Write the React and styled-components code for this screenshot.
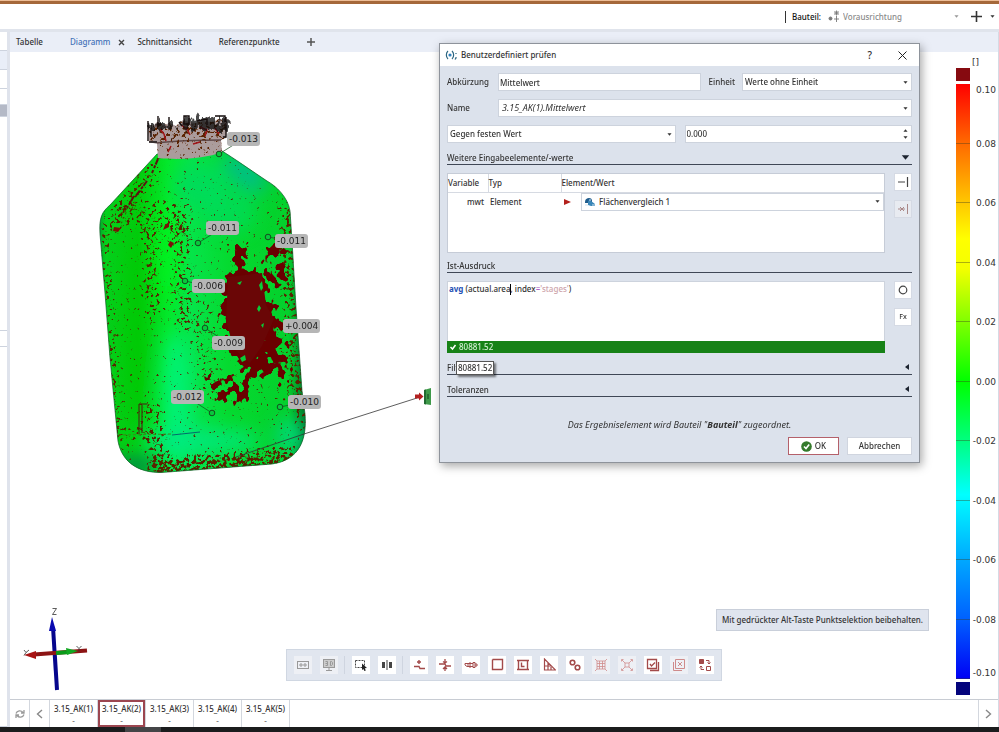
import React from 'react'
import styled, { createGlobalStyle, css } from 'styled-components'

const sans = '"Noto Sans", "Open Sans", sans-serif'
const mono = '"DejaVu Sans", sans-serif'

const tabs = [
  { title: 'Tabelle' },
  { title: 'Diagramm', active: true },
  { title: 'Schnittansicht' },
  { title: 'Referenzpunkte' }
]

const stages = ['3.15_AK(1)', '3.15_AK(2)', '3.15_AK(3)', '3.15_AK(4)', '3.15_AK(5)']

const scale = ['0.10', '0.08', '0.06', '0.04', '0.02', '0.00', '-0.02', '-0.04', '-0.06', '-0.08', '-0.10']

// label position and the measured point it belongs to
const deviations = [
  { text: '-0.013', x: 227, y: 131, px: 219, py: 153 },
  { text: '-0.011', x: 206, y: 220, px: 198, py: 242 },
  { text: '-0.011', x: 275, y: 233, px: 268, py: 236 },
  { text: '-0.006', x: 192, y: 278, px: 185, py: 280 },
  { text: '+0.004', x: 283, y: 318 },
  { text: '-0.009', x: 212, y: 335, px: 205, py: 327 },
  { text: '-0.012', x: 171, y: 389, px: 212, py: 412 },
  { text: '-0.010', x: 288, y: 394, px: 280, py: 406 }
]

const Caret = ({ dir = 'down', size = 5, color = '#333' }) => (
  <svg width={size} height={size} viewBox='0 0 6 6' fill={color} aria-hidden='true'>
    {dir === 'down' && <path d='M.5 1.500h5L3 4.500z' />}
    {dir === 'up' && <path d='M.5 4.500h5L3 1.500z' />}
    {dir === 'left' && <path d='M5 0v6L1 3z' />}
  </svg>
)

const Dropdown = ({ id, label, value, italic, indent, icon }) => (
  <SelectBox>
    {icon}
    <select id={id} aria-label={label} className={italic ? 'italic' : indent ? 'indent' : ''}>
      <option>{value}</option>
    </select>
    <Caret />
  </SelectBox>
)

const Section = ({ title, open, plain, children }) => (
  <SectionHeader $plain={plain}>
    <span>{title}</span>
    {!plain && (
      <button aria-label={title}>
        <Caret dir={open ? 'down' : 'left'} size={open ? 9 : 6} color='#1d2430' />
      </button>
    )}
    {children}
  </SectionHeader>
)

const outline =
  'M157 153 L222 150 C232 156 252 170 267 180 C276 185 288 196 290 210 L292 240 L296 307 L302 390 L305 413 ' +
  'C307 438 300 459 272 463 L168 471 C140 474 122 462 118 440 L110 357 L105 292 L100 233 C99 216 102 211 110 204 Z'

const Bottle = () => (
  <svg width='350' height='375' viewBox='90 105 350 375' aria-hidden='true'>
    <defs>
      <clipPath id='bottle'><path d={outline} /></clipPath>
      <linearGradient id='side' x1='0' x2='1'>
        <stop offset='0' stopColor='#028a3a' />
        <stop offset='0.05' stopColor='#05d01c' />
        <stop offset='0.2' stopColor='#02cc0c' />
        <stop offset='0.34' stopColor='#04e82c' />
        <stop offset='0.45' stopColor='#06e44a' />
        <stop offset='0.62' stopColor='#05da30' />
        <stop offset='0.9' stopColor='#04d02c' />
        <stop offset='1' stopColor='#03592a' />
      </linearGradient>
      <filter id='soft' x='-50%' y='-50%' width='200%' height='200%'><feGaussianBlur stdDeviation='9' /></filter>
      <filter id='speckle' filterUnits='userSpaceOnUse' x='90' y='105' width='230' height='375'>
        <feTurbulence type='fractalNoise' baseFrequency='0.3' numOctaves='3' seed='7' result='noise' />
        <feGaussianBlur in='SourceGraphic' stdDeviation='4' result='area' />
        <feComposite in='noise' in2='area' operator='arithmetic' k1='0' k2='9' k3='4.500' k4='-7' result='hit' />
        <feFlood floodColor='#5a2206' />
        <feComposite in2='hit' operator='in' />
      </filter>
      <filter id='blotch' filterUnits='userSpaceOnUse' x='190' y='230' width='120' height='180'>
        <feTurbulence type='fractalNoise' baseFrequency='0.14 0.11' numOctaves='2' seed='12' result='noise' />
        <feGaussianBlur in='SourceGraphic' stdDeviation='4' result='area' />
        <feComposite in='noise' in2='area' operator='arithmetic' k1='0' k2='22' k3='11' k4='-17' result='hit' />
        <feFlood floodColor='#6a0606' />
        <feComposite in2='hit' operator='in' />
      </filter>
      <filter id='ink' filterUnits='userSpaceOnUse' x='140' y='110' width='95' height='40'>
        <feTurbulence type='fractalNoise' baseFrequency='0.26 0.12' numOctaves='3' seed='4' result='noise' />
        <feGaussianBlur in='SourceGraphic' stdDeviation='2' result='area' />
        <feComposite in='noise' in2='area' operator='arithmetic' k1='0' k2='14' k3='7' k4='-11' result='hit' />
        <feFlood floodColor='#0c0808' />
        <feComposite in2='hit' operator='in' />
      </filter>
      <clipPath id='crown'>
        <path d='M148 124 L151 127 L157 121 L163 124 L170 122 L176 125 L183 119 L189 121 L196 122 L203 120 L212 121 L219 118 L227 118 L226 137 L221 139 L222 151 C205 158 178 159 158 157 L157 143 L149 141Z' />
      </clipPath>
    </defs>

    <g clipPath='url(#bottle)'>
      <rect x='95' y='145' width='215' height='335' fill='url(#side)' />
      <g filter='url(#soft)'>
        <ellipse cx='245' cy='172' rx='26' ry='12' fill='#00b8a4' opacity='0.8' transform='rotate(38 245 172)' />
        <ellipse cx='200' cy='185' rx='26' ry='22' fill='#00dc58' />
        <ellipse cx='230' cy='210' rx='26' ry='22' fill='#00dc60' opacity='0.7' />
        <ellipse cx='176' cy='400' rx='14' ry='70' fill='#04f488' opacity='0.8' />
        <ellipse cx='200' cy='440' rx='60' ry='13' fill='#02e884' opacity='0.8' />
        <ellipse cx='290' cy='435' rx='15' ry='18' fill='#02d884' opacity='0.8' />
        <ellipse cx='166' cy='250' rx='9' ry='50' fill='#04f814' opacity='0.7' />
        <ellipse cx='136' cy='330' rx='12' ry='90' fill='#00c800' opacity='0.6' />
        <ellipse cx='135' cy='464' rx='26' ry='7' fill='#047c5c' />
      </g>
      <g filter='url(#speckle)'>
        <rect x='95' y='145' width='215' height='335' opacity='0.1' />
        <path d='M153 160 L108 206 L112 240 L128 215 L160 175Z' opacity='0.36' />
        <path d='M112 205 L188 200 L190 235 L120 225Z' opacity='0.34' />
        <path d='M142 225 L157 225 L160 320 L144 320Z' opacity='0.4' />
        <path d='M172 220 L190 215 L192 330 L174 330Z' opacity='0.38' />
        <path d='M98 220 L108 220 L124 450 L112 450Z' opacity='0.4' />
        <path d='M280 200 L294 205 L308 440 L290 400Z' opacity='0.52' />
        <path d='M190 300 L215 290 L218 400 L196 400Z' opacity='0.22' />
        <path d='M150 458 L300 446 L290 470 L150 480Z' opacity='0.66' />
        <path d='M138 400 L160 400 L170 470 L150 470Z' opacity='0.36' />
        <path d='M112 425 L160 430 L160 440 L112 436Z' opacity='0.36' />
      </g>
      <g filter='url(#blotch)'>
        <path d='M226 272 L264 268 L270 300 L281 318 L272 350 L266 372 L246 376 L230 354 L221 322Z' />
        <path d='M231 240 L241 240 L250 272 L236 274Z' />
        <path d='M262 246 L284 238 L288 290 L268 280Z' opacity='0.64' />
        <path d='M208 372 L250 378 L250 404 L210 404Z' opacity='0.64' />
        <path d='M262 330 L288 340 L290 382 L262 380Z' opacity='0.66' />
      </g>
      <path d='M228 276 L262 272 L266 304 L274 318 L262 345 L250 362 L234 348 L226 320Z' fill='#6a0606' />
      <path d='M237 282l5-2-2 4zM259 284l3-4 1 7-2 3zM257 308l2-4 2 3-2 4zM261 324l3-2-1 5zM240 357l5-3 1 5-4 2z' fill='#08cc38' />
      <path d='M139 403v30M142 404v28M139 403h8' stroke='#4a1a10' fill='none' />
      <path d='M172 434l28-3' stroke='#046a6c' />
      <path d='M118 434l54-1' stroke='#3b8a1a' strokeDasharray='3 2' />
      <path d='M158 158l-6 14M147 180l-12 16M134 195l-7 12' stroke='#5c1210' strokeWidth='2' strokeDasharray='6 1 3 2' />
      <path d='M165 224l4-3 0 5-6 3zM170 240l4 2-3 5-3-3z' fill='#7a1208' />
      <path d='M114 226l7 1-3 4-5-1z' fill='#7a1208' />
    </g>
    <path d={outline} fill='none' stroke='#0a5a22' strokeWidth='1' opacity='0.7' />

    <g clipPath='url(#crown)'>
      <rect x='145' y='112' width='85' height='50' fill='#ab9c9c' />
      <path d='M157 142 C180 139 205 139 222 139' stroke='#5f4848' fill='none' strokeWidth='1.500' />
      <g filter='url(#speckle)'>
        <rect x='145' y='112' width='85' height='28' opacity='0.5' />
        <rect x='145' y='140' width='85' height='22' opacity='0.25' />
      </g>
      <path d='M160 128l4 5 2 7M181 124l6 4 3 6M200 126l7 3-2 6M215 127l4 6M171 145l-3 6M193 143l7-2' stroke='#a01418' fill='none' strokeWidth='1.500' />
    </g>
    <path filter='url(#ink)' d='M148 120h28v9h-28zM182 116h46v14h-46z' opacity='0.75' />
    <path d='M148 120v20M151 124v12M158 115v9l3-2M169 116v7M179 121l3 4M184 115h5v8h-5zM197 120l10-2v6M215 115h10v6M226 116v20h-3M149 141h8' stroke='#140c0c' strokeWidth='1.400' fill='none' />

    <g stroke='#164a1e' fill='none'>
      {deviations.filter((d) => d.px).map((d) => (
        <g key={d.text + d.px}>
          <path d={`M${d.px} ${d.py}L${d.x + 16} ${d.y + 7}`} strokeWidth='0.700' />
          <circle cx={d.px} cy={d.py} r='2.800' fill='#08c83c' />
        </g>
      ))}
    </g>
    <path d='M236 456 L304 433 L417 397' stroke='#333' strokeWidth='0.800' fill='none' />
    <path d='M415 393.500h4v-2l4.500 4-4.500 4v-2h-4z' fill='#b32020' />
    <path d='M424 389l7-2v17l-7-1z' fill='#3f9a4a' />
    <path d='M424 389l2-.6v15l-2-.4z' fill='#226b31' />
    <path d='M428 393v5' stroke='#14431c' />
  </svg>
)

const Axes = () => (
  <svg width='70' height='90' viewBox='20 605 70 90' aria-hidden='true'>
    <path d='M53 626l4 63' stroke='#06068c' strokeWidth='4' />
    <path d='M52 616l4 14h-7z' fill='#0a0ab0' />
    <path d='M34 653.500l53-4' stroke='#8c1414' strokeWidth='4' />
    <path d='M24 654l12-4v8z' fill='#a81414' />
    <path d='M56 652l14-1' stroke='#0a9a1a' strokeWidth='4' />
    <path d='M78 650l-12-3 1 7z' fill='#12a822' />
    <g stroke='#333' strokeWidth='0.800' fill='none'>
      <path d='M52.500 607.500h4l-4 6h4' />
      <path d='M24 649l2 2.500 3-2.500M26 651.500l-2 3' />
      <path d='M76.500 645l2.500 2.500 2.500-2.500M79 647.500v3' />
    </g>
  </svg>
)

const red = '#a34a4a'
const toolGroups = [
  [
    { name: 'Aufnahme', off: true, icon: <g stroke='#999' fill='none'><rect x='1.500' y='3.500' width='11' height='7' /><path d='M4 6h2v2H4zM8 6h2v2H8z' /></g> },
    { name: '3D-Ansicht', off: true, icon: <g stroke='#999' fill='none'><rect x='1.500' y='1.500' width='11' height='8' fill='#ccc' /><path d='M3.500 3.500h2v4h-2M3.500 5.500h2M8.500 3.500v4h1l1-1v-2l-1-1zM7 10v2M4 12.500h6' /></g> }
  ],
  [
    { name: 'Auswahl', icon: <g><path d='M1.500 2.500h9v7h-9z' fill='none' stroke='#444' strokeDasharray='2 1' /><path d='M8 5.500l5 4.500-2.200.3 1 2.200-1.400.6-1-2.200L8 12z' fill='#222' /></g> },
    { name: 'Spiegeln', icon: <g fill='#444'><path d='M2 4h3v6H2zM9 4h3v6H9zM6.500 2h1v10h-1z' /></g> }
  ],
  [
    { name: 'Punkt', icon: <path d='M7 2v4M5 4h4M2 8.500h5l1 2h5' stroke={red} strokeWidth='1.400' fill='none' /> },
    { name: 'Abstand', icon: <path d='M1 6h6l1 2h5M7 1v4M5 3.500L7 5l2-1.500M7 13V9M5 11l2-2 2 2' stroke={red} strokeWidth='1.300' fill='none' /> },
    { name: 'Bohrung', icon: <path d='M1 5.500h3v3H3l-2-1.500zM6 4v6M4 5.500h5M4 8.500h5M9 4.500h2v5H9zM11 6h2v2h-2' stroke={red} strokeWidth='1' fill='none' /> },
    { name: 'Rahmen', icon: <path d='M2.500 1.500h10v10M12.500 11.500h-10v-10' stroke={red} strokeWidth='1.400' fill='none' /> },
    { name: 'Ebene', icon: <path d='M2.500 2.500h9v9h-9zM1 2.500h12M1 11.500h12M5.500 4.500v4h3' stroke={red} strokeWidth='1.400' fill='none' /> },
    { name: 'Winkel', icon: <path d='M2.500 1v11h11zM3 8h6M6 5v7M9 9v3' stroke={red} strokeWidth='1.200' fill='none' /> },
    { name: 'Kreise', icon: <g stroke={red} strokeWidth='1.600' fill='none'><circle cx='4.500' cy='4.500' r='2.300' /><circle cx='9.500' cy='9.500' r='2.300' /><path d='M5 7l2-2M7 9l2-2' strokeWidth='1' /></g> },
    { name: 'Raster', off: true, icon: <path d='M3 3h8v8H3zM5.500 3v8M8.500 3v8M3 5.500h8M3 8.500h8M1 1l2 2M13 1l-2 2M1 13l2-2M13 13l-2-2' stroke='#cf8b8b' fill='none' strokeWidth='0.800' /> },
    { name: 'Zentrum', off: true, icon: <path d='M5 5h4v4H5zM2 2l3 3M12 2L9 5M2 12l3-3M12 12L9 9M1.500 3.500v-2h2M10.500 1.500h2v2M1.500 10.500v2h2M10.500 12.500h2v-2' stroke='#cf8b8b' fill='none' strokeWidth='0.800' /> },
    { name: 'Bestätigen', icon: <path d='M1.500 1.500h9v9h-9zM12.500 4v8.500H4M4 6l1.500 2L9 4.500' stroke={red} strokeWidth='1.300' fill='none' /> },
    { name: 'Verwerfen', off: true, icon: <path d='M3.500 1.500h9v9h-9zM1.500 4v8.500H10M6 4l4 4M10 4l-4 4' stroke='#cf8b8b' fill='none' /> },
    { name: 'Tauschen', icon: <g stroke={red} fill='none'><path d='M1.500 1.500h4v4h-4z' fill={red} /><path d='M8.500 8.500h4v4h-4zM8 2.500h3V6M9.500 4.500L11 6l1.500-1.500M6 11.500H3V8M1.500 9.500L3 8l1.500 1.500' /></g> }
  ]
]

const CheckDialog = () => (
  <Dialog role='dialog' aria-labelledby='dialogTitle'>
    <TitleBar>
      <svg width='12' height='10' viewBox='0 0 12 10' fill='none' stroke='#2b6580' strokeWidth='1.200' aria-hidden='true'>
        <path d='M3 1C.8 3 .8 7 3 9M7 1c2.200 2 2.200 6 0 8M11 7v1l-1 1.500' />
        <circle cx='5' cy='5' r='1' fill='#2a7cb8' stroke='#2a7cb8' />
        <path d='M11 3v1' />
      </svg>
      <h1 id='dialogTitle'>Benutzerdefiniert prüfen</h1>
      <button className='help'>?</button>
      <button aria-label='Schließen'>
        <svg width='9' height='9' viewBox='0 0 9 9' stroke='#222' fill='none'><path d='M.5.5l8 8M8.500.5l-8 8' /></svg>
      </button>
    </TitleBar>
    <DialogBody>
      <FormRow>
        <FieldLabel htmlFor='short' $wide>Abkürzung</FieldLabel>
        <TextInput id='short' defaultValue='Mittelwert' />
        <FieldLabel htmlFor='unit' $gap>Einheit</FieldLabel>
        <UnitCell><Dropdown id='unit' value='Werte ohne Einheit' /></UnitCell>
      </FormRow>
      <FormRow>
        <FieldLabel htmlFor='name' $wide>Name</FieldLabel>
        <Dropdown id='name' value='3.15_AK(1).Mittelwert' italic />
      </FormRow>
      <FormRow $split>
        <Dropdown label='Vergleich' value='Gegen festen Wert' />
        <Spinner>
          <input aria-label='Sollwert' defaultValue='0.000' />
          <div>
            <button aria-label='Erhöhen'><Caret dir='up' /></button>
            <button aria-label='Verringern'><Caret /></button>
          </div>
        </Spinner>
      </FormRow>

      <Section title='Weitere Eingabeelemente/-werte' open />
      <Split>
        <TableBox>
          <VariableTable>
            <colgroup><col className='variable' /><col className='type' /><col /></colgroup>
            <thead>
              <tr><th>Variable</th><th>Typ</th><th>Element/Wert</th></tr>
            </thead>
            <tbody>
              <tr>
                <td className='right'>mwt</td>
                <td>Element</td>
                <td>
                  <ElementCell>
                    <svg width='7' height='8' viewBox='0 0 7 8' fill='#b3201c' aria-hidden='true'><path d='M0 1l7 3-7 3z' /></svg>
                    <Dropdown
                      label='Element'
                      value='Flächenvergleich 1'
                      indent
                      icon={
                        <svg width='12' height='10' viewBox='0 0 12 10' aria-hidden='true'>
                          <path d='M1 5c0-3 2-4 4-4s3 1 3 3v2H1z' fill='#1f5c8c' />
                          <path d='M4 8V5c0-2 2-2 3-1l4 3v2H7z' fill='#3a86b8' />
                          <path d='M1 8h3M5 3h2M8 8h3' stroke='#cfe3f0' />
                        </svg>
                      }
                    />
                  </ElementCell>
                </td>
              </tr>
            </tbody>
          </VariableTable>
        </TableBox>
        <SideButtons>
          <button aria-label='Einfügen'>
            <svg width='12' height='12' viewBox='0 0 12 12' stroke='#444' fill='none'><path d='M1 6h7M10.500 1v10' strokeWidth='1.200' /></svg>
          </button>
          <button aria-label='Entfernen' disabled>
            <svg width='12' height='12' viewBox='0 0 12 12' stroke='#a88' fill='none'><path d='M1 6h7M3 4l4 4M7 4L3 8M10.500 1v10' /></svg>
          </button>
        </SideButtons>
      </Split>

      <Section title='Ist-Ausdruck' plain />
      <Split>
        <Editor>
          <Code contentEditable suppressContentEditableWarning role='textbox' aria-label='Ist-Ausdruck' spellCheck={false}>
            <b>avg</b> (actual.area<Cursor />, index<em>=</em><i>'stages'</i>)
          </Code>
          <Result>
            <svg width='8' height='8' viewBox='0 0 8 8' stroke='#fff' fill='none' strokeWidth='1.500' aria-hidden='true'><path d='M1.500 4l2 2 3-4' /></svg>
            80881.52
          </Result>
        </Editor>
        <SideButtons>
          <button aria-label='Element wählen'>
            <svg width='10' height='10' viewBox='0 0 10 10' stroke='#444' fill='none'><circle cx='5' cy='5' r='3.800' strokeWidth='1.200' /></svg>
          </button>
          <button>Fx</button>
        </SideButtons>
      </Split>

      <Section title='Filter'><Tooltip role='tooltip'>80881.52</Tooltip></Section>
      <Section title='Toleranzen' />
      <Note>Das Ergebniselement wird Bauteil "<b>Bauteil</b>" zugeordnet.</Note>
      <Actions>
        <ActionButton $primary>
          <svg width='11' height='11' viewBox='0 0 11 11' aria-hidden='true'>
            <circle cx='5.500' cy='5.500' r='5.300' fill='#357a2c' />
            <path d='M3 5.500l2 2 3.200-4' stroke='#fff' strokeWidth='1.600' fill='none' />
          </svg>
          OK
        </ActionButton>
        <ActionButton>Abbrechen</ActionButton>
      </Actions>
    </DialogBody>
  </Dialog>
)

const App = () => (
  <Page>
    <GlobalStyle />
    <TopStrip />
    <TopBar>
      <span className='line' />
      <label htmlFor='part'>Bauteil:</label>
      <svg width='13' height='13' viewBox='0 0 13 13' stroke='#777' fill='#777' aria-hidden='true'>
        <circle cx='2.500' cy='8.500' r='1.500' />
        <path d='M8.500 6v6M6 9h5M6 3h5M8.500 .5v5M6.500 1l4 4M10.500 1l-4 4' fill='none' strokeWidth='0.900' />
      </svg>
      <PartSelect>
        <select id='part'><option>Vorausrichtung</option></select>
        <Caret color='#999' />
      </PartSelect>
      <button aria-label='Neu'>
        <svg width='11' height='11' viewBox='0 0 11 11' stroke='#333' strokeWidth='1.600'><path d='M0 5.500h11M5.500 0v11' /></svg>
      </button>
      <button aria-label='Mehr'><Caret /></button>
    </TopBar>

    <Workspace>
      <SideStrip>
        <i /><i className='blue' /><i /><i className='short' /><i className='grey' /><i className='fill' /><i className='short' /><i className='rest' />
      </SideStrip>
      <Main>
        <TabBar>
          {tabs.map((t) => (
            <Tab key={t.title} $active={t.active}>
              <button>{t.title}</button>
              {t.active && (
                <button className='close' aria-label='Tab schließen'>
                  <svg width='7' height='7' viewBox='0 0 7 7' stroke='#444' strokeWidth='1.400'><path d='M1 1l5 5M6 1L1 6' /></svg>
                </button>
              )}
            </Tab>
          ))}
          <button aria-label='Neuer Tab'>
            <svg width='8' height='8' viewBox='0 0 8 8' stroke='#555' strokeWidth='1.500'><path d='M0 4h8M4 0v8' /></svg>
          </button>
        </TabBar>

        <Canvas>
          <Model><Bottle /></Model>
          {deviations.map((d, i) => (
            <Pin key={i} style={{ left: d.x - 10, top: d.y - 51 }}>{d.text}</Pin>
          ))}
          <Orientation><Axes /></Orientation>
          <Legend>
            <span className='unit'>[]</span>
            <Limit $color='#860a10' />
            <Scale>
              <Bar>{scale.slice(1).map((s) => <i key={s} />)}</Bar>
              <Ticks>{scale.map((s) => <li key={s}>{s}</li>)}</Ticks>
            </Scale>
            <Limit $color='#04047c' />
          </Legend>
          <Hint>Mit gedrückter Alt-Taste Punktselektion beibehalten.</Hint>
          <ToolDock>
            <Toolbar>
              {toolGroups.map((group, i) => (
                <ToolGroup key={i}>
                  {group.map((t) => (
                    <ToolButton key={t.name} aria-label={t.name} disabled={t.off}>
                      <svg width='14' height='14' viewBox='0 0 14 14'>{t.icon}</svg>
                    </ToolButton>
                  ))}
                </ToolGroup>
              ))}
            </Toolbar>
          </ToolDock>
        </Canvas>

        <StageBar>
          <button className='nav' aria-label='Aktualisieren'>
            <svg width='10' height='10' viewBox='0 0 10 10' stroke='#999' fill='none' strokeWidth='1.300'><path d='M1 4.500C2 1.500 6 1 8 3.500M9 1v3H6M9 5.500C8 8.500 4 9 2 6.500M1 9V6h3' /></svg>
          </button>
          <button className='nav' aria-label='Zurück'>
            <svg width='7' height='10' viewBox='0 0 7 10' stroke='#888' fill='none' strokeWidth='1.400'><path d='M6 1L1.500 5 6 9' /></svg>
          </button>
          {stages.map((s, i) => (
            <Stage key={s} $selected={i === 1}>
              <span>{s}</span>
              <span className='sub'>-</span>
            </Stage>
          ))}
          <button className='nav next' aria-label='Weiter'>
            <svg width='7' height='10' viewBox='0 0 7 10' stroke='#888' fill='none' strokeWidth='1.400'><path d='M1 1l4.500 4L1 9' /></svg>
          </button>
        </StageBar>
      </Main>
    </Workspace>
    <Taskbar><span /></Taskbar>
    <CheckDialog />
  </Page>
)

export default App

const GlobalStyle = createGlobalStyle`
  * {
    box-sizing: border-box;
  }
  body {
    margin: 0;
    font-family: ${sans};
    font-size: 8px;
    font-weight: 500;
    line-height: 12px;
    color: #333;
    background-color: white;
  }
  button, input, select {
    font: inherit;
    color: inherit;
    background: none;
    border: none;
    border-radius: 0;
    padding: 0;
    margin: 0;
    outline: none;
  }
  button {
    display: flex;
    align-items: center;
    justify-content: center;
  }
  select {
    appearance: none;
  }
  svg {
    flex: none;
  }
`

const Page = styled.div`
  position: relative;
  min-height: 100vh;
  display: flex;
  flex-direction: column;
  overflow: hidden;
`

const TopStrip = styled.div`
  height: 4px;
  background-color: #a5683a;
  border-top: 1px solid #edbd96;
`

const TopBar = styled.header`
  height: 28px;
  display: flex;
  align-items: center;
  justify-content: flex-end;
  padding-right: 4px;
  border-bottom: 3px solid #e0e4ec;
  .line {
    width: 1px;
    height: 12px;
    margin-right: 6px;
    background-color: #333;
  }
  label {
    margin-right: 7px;
    color: #111;
  }
  > button {
    margin-left: 8px;
  }
`

const PartSelect = styled.div`
  display: flex;
  align-items: center;
  width: 120px;
  padding-right: 4px;
  margin-left: 2px;
  color: #8a8a8a;
  select {
    flex: 1;
  }
`

const Workspace = styled.div`
  flex: 1;
  display: flex;
`

const SideStrip = styled.aside`
  width: 10px;
  display: flex;
  flex-direction: column;
  border-right: 3px solid #dfe3ec;
  i {
    height: 19px;
    border-bottom: 1px solid #cdd3de;
  }
  .blue {
    background-color: #e9eef8;
  }
  .short {
    height: 16px;
  }
  .grey {
    height: 12px;
    background-color: #b4b9c6;
  }
  .fill {
    height: 214px;
  }
  .rest {
    flex: 1;
  }
`

const Main = styled.main`
  flex: 1;
  min-width: 0;
  display: flex;
  flex-direction: column;
  border-right: 1px solid #d5dae4;
`

const TabBar = styled.nav`
  height: 20px;
  display: flex;
  align-items: center;
  padding-left: 6px;
  background-color: #eaeef7;
`

const Tab = styled.div`
  display: flex;
  align-items: center;
  margin-right: ${(p) => (p.$active ? 12 : 27)}px;
  color: ${(p) => (p.$active ? '#4472b8' : '#333')};
  .close {
    margin-left: 8px;
  }
`

const Canvas = styled.section`
  position: relative;
  flex: 1;
  display: flex;
  justify-content: flex-end;
`

const Model = styled.div`
  position: absolute;
  left: 80px;
  top: 54px;
`

const Orientation = styled.div`
  position: absolute;
  left: 10px;
  bottom: 0;
`

const Pin = styled.span`
  position: absolute;
  padding: 1px 2px;
  border-radius: 3px;
  background-color: #b6b6b6;
  font-family: ${mono};
  font-size: 9px;
  color: #222;
`

const Legend = styled.div`
  width: 44px;
  display: flex;
  flex-direction: column;
  padding: 4px 0 4px 2px;
  font-family: ${mono};
  font-size: 9px;
  .unit {
    padding-left: 16px;
  }
`

const Limit = styled.div`
  width: 14px;
  height: 13px;
  background-color: ${(p) => p.$color};
`

const Scale = styled.div`
  flex: 1;
  display: flex;
  margin: 3px 0;
`

const Bar = styled.div`
  width: 14px;
  display: flex;
  flex-direction: column;
  background: linear-gradient(#f00 0%, #ff6a00 10%, #ffc800 20%, #ff0 26%, #f4ff00 31%, #80ff00 40%, #0f0 50%, #00ff80 60%, #0ff 69%, #00a8ff 80%, #0060ff 90%, #0000f4 100%);
  i {
    flex: 1;
    border-bottom: 1px solid rgba(60, 60, 30, 0.4);
  }
`

const Ticks = styled.ul`
  flex: 1;
  display: flex;
  flex-direction: column;
  margin: 0;
  padding: 0 2px 0 0;
  list-style: none;
  text-align: right;
  white-space: nowrap;
  li {
    flex: 2 1 0;
    display: flex;
    align-items: center;
    justify-content: flex-end;
  }
  li:first-child {
    flex: 1 1 0;
    align-items: flex-start;
  }
  li:last-child {
    flex: 1 1 0;
    align-items: flex-end;
  }
`

const Hint = styled.div`
  position: absolute;
  right: 69px;
  bottom: 68px;
  padding: 4px 5px;
  border: 1px solid #c9cfda;
  background-color: #dfe4ee;
`

const ToolDock = styled.div`
  position: absolute;
  left: 0;
  right: 0;
  bottom: 18px;
  display: flex;
  justify-content: center;
`

const Toolbar = styled.div`
  display: flex;
  padding: 6px 7px;
  border: 1px solid #d0d7e2;
  background-color: #e1e6ef;
`

const ToolGroup = styled.div`
  display: flex;
  gap: 8px;
  & + & {
    margin-left: 6px;
    padding-left: 7px;
    border-left: 1px solid #cfd5e0;
  }
`

const ToolButton = styled.button`
  width: 18px;
  height: 18px;
  background-color: white;
  &:disabled {
    background-color: #eef0f5;
  }
`

const StageBar = styled.footer`
  height: 28px;
  display: flex;
  border-top: 1px solid #c8ccd3;
  .nav {
    width: 20px;
    border-right: 1px solid #d3d7de;
  }
  .next {
    margin-left: auto;
    border-right: none;
    border-left: 1px solid #d3d7de;
  }
`

const Stage = styled.button`
  width: 48px;
  flex-direction: column;
  justify-content: flex-end;
  border-right: 1px solid #d3d7de;
  ${(p) => p.$selected && css`
    box-shadow: inset 0 0 0 2px #9c4650;
  `}
  .sub {
    color: #777;
  }
`

const Taskbar = styled.div`
  height: 5px;
  background-color: #1b1c1d;
  span {
    display: block;
    width: 36px;
    height: 5px;
    margin-left: 125px;
    background-color: #444547;
  }
`

const Dialog = styled.div`
  position: absolute;
  top: 43px;
  right: 79px;
  width: 481px;
  border: 1px solid #8e939b;
  background-color: #dce2ec;
  box-shadow: 2px 3px 9px rgba(0, 0, 0, 0.35);
`

const TitleBar = styled.div`
  height: 22px;
  display: flex;
  align-items: center;
  padding: 0 12px 0 5px;
  background-color: white;
  h1 {
    flex: 1;
    margin: 0 0 0 4px;
    font-size: 8px;
    font-weight: 500;
  }
  .help {
    margin-right: 26px;
    font-size: 10px;
  }
`

const DialogBody = styled.div`
  display: flex;
  flex-direction: column;
  padding: 7px;
`

const FormRow = styled.div`
  display: flex;
  align-items: center;
  height: 18px;
  gap: ${(p) => (p.$split ? 9 : 0)}px;
  & + & {
    margin-top: 8px;
  }
`

const FieldLabel = styled.label`
  flex: none;
  width: ${(p) => (p.$wide ? '51px' : 'auto')};
  margin: ${(p) => (p.$gap ? '0 7px 0 8px' : 0)};
`

const field = css`
  height: 18px;
  background-color: white;
  border: 1px solid #cdd3dd;
`

const TextInput = styled.input`
  ${field}
  flex: 1;
  min-width: 0;
  padding: 0 1px;
`

const SelectBox = styled.div`
  ${field}
  flex: 1;
  min-width: 0;
  display: flex;
  align-items: center;
  padding: 0 3px 0 2px;
  select {
    flex: 1;
    min-width: 0;
    height: 16px;
  }
  .italic {
    padding-left: 1px;
    font-style: italic;
    font-size: 9px;
    font-weight: 400;
  }
  .indent {
    padding-left: 3px;
  }
`

const UnitCell = styled.div`
  display: flex;
  width: 170px;
`

const Spinner = styled.div`
  ${field}
  flex: 1;
  min-width: 0;
  display: flex;
  padding: 0 3px 0 1px;
  input {
    flex: 1;
    min-width: 0;
  }
  div {
    display: flex;
    flex-direction: column;
    justify-content: space-evenly;
  }
`

const SectionHeader = styled.div`
  position: relative;
  height: ${(p) => (p.$plain ? 20 : 22)}px;
  display: flex;
  align-items: flex-end;
  justify-content: space-between;
  border-bottom: 1px solid #3f4756;
  button {
    height: 14px;
    padding-right: 2px;
  }
`

const Split = styled.div`
  display: flex;
  gap: 9px;
  margin-top: 8px;
`

const TableBox = styled.div`
  flex: 1;
  height: 80px;
  background-color: white;
  border: 1px solid #c6ccd7;
`

const VariableTable = styled.table`
  width: 100%;
  table-layout: fixed;
  border-collapse: collapse;
  .variable {
    width: 40px;
  }
  .type {
    width: 73px;
  }
  th, td {
    height: 18px;
    padding: 0 0 0 2px;
    text-align: left;
    font-weight: 500;
  }
  th {
    padding-left: 0;
    border-bottom: 1px solid #d6dae2;
    border-right: 1px solid #d6dae2;
  }
  th:last-child {
    border-right: none;
  }
  .right {
    padding-right: 4px;
    text-align: right;
  }
`

const ElementCell = styled.div`
  display: flex;
  align-items: center;
  gap: 10px;
  padding-left: 1px;
`

const SideButtons = styled.div`
  display: flex;
  flex-direction: column;
  gap: 9px;
  button {
    width: 18px;
    height: 18px;
    background-color: white;
    border: 1px solid #d5dae4;
    font-size: 7px;
  }
  button:disabled {
    background-color: #e8ebf1;
  }
`

const Editor = styled.div`
  flex: 1;
  background-color: white;
`

const Code = styled.div`
  height: 60px;
  padding: 1px;
  border: 1px solid #cdd3dd;
  border-bottom: none;
  outline: none;
  b {
    color: #2450b4;
  }
  em {
    color: #a04ac0;
    font-style: normal;
  }
  i {
    color: #cda4aa;
    font-style: normal;
  }
`

const Cursor = styled.span`
  display: inline-block;
  width: 1px;
  height: 11px;
  margin-right: -1px;
  vertical-align: middle;
  background-color: black;
`

const Result = styled.div`
  height: 12px;
  display: flex;
  align-items: center;
  gap: 2px;
  padding-left: 2px;
  background-color: #178217;
  color: #d4efd4;
`

const Tooltip = styled.span`
  position: absolute;
  left: 9px;
  top: 8px;
  padding: 0 1px;
  border: 1px solid #555;
  background-color: white;
  box-shadow: 2px 2px 2px rgba(0, 0, 0, 0.5);
`

const Note = styled.p`
  margin: 22px 0 6px;
  text-align: center;
  font-style: italic;
  font-size: 9px;
  font-weight: 400;
`

const Actions = styled.div`
  display: flex;
  justify-content: flex-end;
  gap: 8px;
`

const ActionButton = styled.button`
  min-width: ${(p) => (p.$primary ? 51 : 65)}px;
  height: 18px;
  gap: 3px;
  background-color: white;
  border: 1px solid ${(p) => (p.$primary ? '#b4606a' : '#d0d5df')};
`
